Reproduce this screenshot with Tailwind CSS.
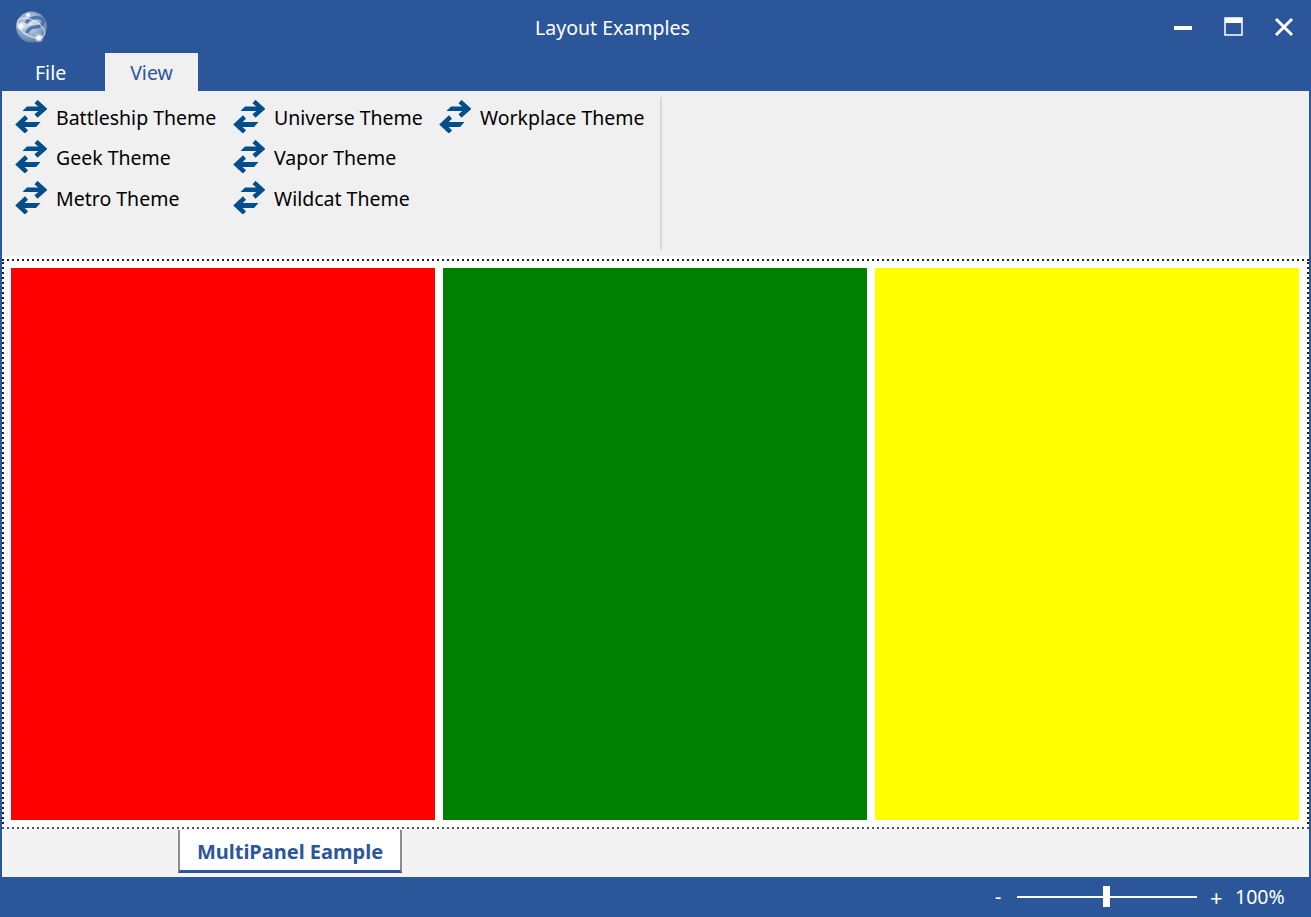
<!DOCTYPE html>
<html lang="en">
<head>
    <meta charset="UTF-8">
    <title>Layout Examples</title>
    <script src="https://cdn.jsdelivr.net/npm/@tailwindcss/browser@4"></script>
</head>
<body class="h-[917px] w-[1311px] overflow-hidden flex flex-col bg-[#2b579a] font-['Noto_Sans','Open_Sans',sans-serif] text-[19.5px]">
    <!-- title bar -->
    <header class="h-[53px] shrink-0 flex items-center text-white">
        <svg class="ml-[14px] mt-[1px] shrink-0" width="36" height="36" viewBox="0 0 36 36">
            <defs>
                <radialGradient id="globe" cx="45%" cy="40%" r="60%">
                    <stop offset="0" stop-color="#dfe8f3"/>
                    <stop offset="0.55" stop-color="#9db4d2"/>
                    <stop offset="1" stop-color="#557aa9"/>
                </radialGradient>
                <radialGradient id="glow">
                    <stop offset="0.25" stop-color="#fff"/>
                    <stop offset="1" stop-color="#fff" stop-opacity="0"/>
                </radialGradient>
            </defs>
            <circle cx="17.5" cy="18" r="15.5" fill="url(#globe)"/>
            <path d="M12 14c3-5 11-7 16-4 3 3 0 8-6 8-5 0-8 2-9 6" fill="none" stroke="#3f6aa3" stroke-width="3.500" stroke-opacity=".85"/>
            <ellipse cx="17" cy="19" rx="15" ry="8" transform="rotate(28 17 19)" fill="none" stroke="#fff" stroke-opacity=".7"/>
            <circle cx="7" cy="17" r="5" fill="url(#glow)"/>
            <circle cx="25" cy="29" r="5" fill="url(#glow)"/>
            <circle cx="14" cy="6" r="3" fill="url(#glow)"/>
        </svg>
        <div class="w-[1125px] mt-[3px] text-center">Layout Examples</div>
        <div class="flex items-center">
            <svg class="ml-[-2px] mt-[1px]" width="20" height="20" viewBox="0 0 20 20"><rect x="1" y="9" width="18" height="4" fill="#fff"/></svg>
            <svg class="ml-[31px]" width="20" height="20" viewBox="0 0 20 20"><rect x="1" y="1" width="17" height="17" fill="none" stroke="#fff" stroke-width="1.5"/><rect x="1" y="1" width="17" height="5" fill="#fff"/></svg>
            <svg class="ml-[30px]" width="20" height="20" viewBox="0 0 20 20"><path d="M2 2l16 16M18 2L2 18" stroke="#fff" stroke-width="3"/></svg>
        </div>
    </header>

    <!-- menu tabs -->
    <nav class="h-[38px] shrink-0 flex">
        <div class="w-[105px] pl-[35px] leading-[40px] text-white">File</div>
        <div class="w-[93px] text-center leading-[40px] bg-[#f0f0f0] text-[#2b579a]">View</div>
    </nav>

    <div class="flex-1 mx-[2px] flex flex-col bg-white min-h-0">
        <!-- ribbon -->
        <section class="h-[165px] shrink-0 bg-[#f0f0f0] flex items-start text-black">
            <div class="grid grid-cols-[218px_206px_auto] grid-rows-[40px_41px_40px] pl-[13px] pt-[9px] w-[658px] h-[130px]">
                <div class="flex items-start gap-[9px]"><svg class="shrink-0" width="32" height="33" viewBox="0 0 32 33"><use href="#swap"/></svg><span class="mt-[3px]">Battleship Theme</span></div>
                <div class="flex items-start gap-[9px]"><svg class="shrink-0" width="32" height="33" viewBox="0 0 32 33"><use href="#swap"/></svg><span class="mt-[3px]">Universe Theme</span></div>
                <div class="flex items-start gap-[9px]"><svg class="shrink-0" width="32" height="33" viewBox="0 0 32 33"><use href="#swap"/></svg><span class="mt-[3px]">Workplace Theme</span></div>
                <div class="flex items-start gap-[9px]"><svg class="shrink-0" width="32" height="33" viewBox="0 0 32 33"><use href="#swap"/></svg><span class="mt-[3px]">Geek Theme</span></div>
                <div class="flex items-start gap-[9px] col-start-2"><svg class="shrink-0" width="32" height="33" viewBox="0 0 32 33"><use href="#swap"/></svg><span class="mt-[3px]">Vapor Theme</span></div>
                <div class="flex items-start gap-[9px] col-start-1"><svg class="shrink-0" width="32" height="33" viewBox="0 0 32 33"><use href="#swap"/></svg><span class="mt-[3px]">Metro Theme</span></div>
                <div class="flex items-start gap-[9px]"><svg class="shrink-0" width="32" height="33" viewBox="0 0 32 33"><use href="#swap"/></svg><span class="mt-[3px]">Wildcat Theme</span></div>
            </div>
            <div class="w-[2px] h-[153px] mt-[6px] bg-[#d9d9d9]"></div>
        </section>

        <!-- panels, dotted focus rectangle is 2px dots every 5px -->
        <main class="h-[570px] shrink-0 mt-[3px] pl-[9px] pr-[10px] py-[9px] flex gap-[8px] [background:repeating-linear-gradient(90deg,#222_0_2px,transparent_2px_5px)_top/100%_2px_no-repeat,repeating-linear-gradient(90deg,#555_0_2px,transparent_2px_5px)_bottom/100%_2px_no-repeat,repeating-linear-gradient(0deg,#222_0_2px,transparent_2px_5px)_left/2px_100%_no-repeat,repeating-linear-gradient(0deg,#222_0_2px,transparent_2px_5px)_right/2px_100%_no-repeat]">
            <div class="flex-1 bg-[#ff0000]"></div>
            <div class="flex-1 bg-[#008000]"></div>
            <div class="flex-1 bg-[#ffff00]"></div>
        </main>

        <!-- document tabs -->
        <div class="flex-1 bg-[#f3f3f3] pl-[176px] pt-[1px]">
            <div class="w-[224px] h-[43px] bg-white border-x-2 border-[#8c8c8c] border-b-[3px] border-b-[#2b579a] text-center font-bold text-[20px] text-[#2b579a] leading-[44px]">MultiPanel Eample</div>
        </div>
    </div>

    <!-- status bar -->
    <footer class="h-[40px] shrink-0 flex items-center text-white">
        <span class="ml-[995px] w-[22px]">-</span>
        <div class="relative w-[180px] h-[2px] bg-white">
            <div class="absolute left-[86px] -top-[10px] w-[7px] h-[21px] bg-white"></div>
        </div>
        <span class="ml-[13px] w-[25px] text-[22px] leading-none">+</span>
        <span>100%</span>
    </footer>

    <svg width="0" height="0" class="absolute">
        <defs>
            <g id="swap">
                <path fill="#004e8c" d="M12 6.500H28V11H7.500Z"/>
                <path fill="none" stroke="#004e8c" stroke-width="4.500" d="M21 1.500L29 8.800L21 16"/>
                <path fill="#004e8c" d="M4 22H25.500L21 27H4Z"/>
                <path fill="none" stroke="#004e8c" stroke-width="4.500" d="M11.500 17L3.500 24.500L11.500 32"/>
            </g>
        </defs>
    </svg>
</body>
</html>
